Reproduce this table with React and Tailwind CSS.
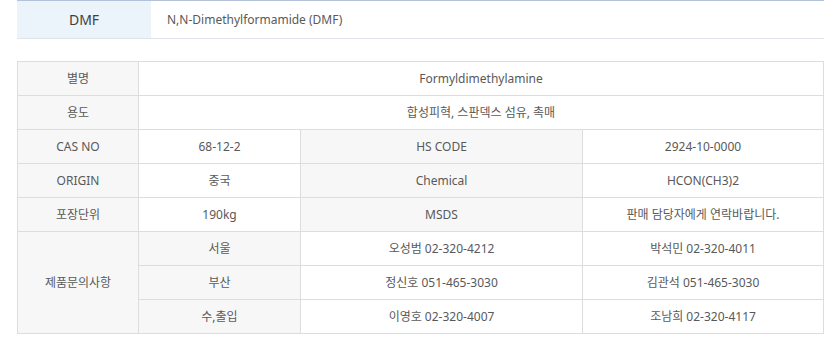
import React from "react";

const H = "bg-[#f7f7f7] flex items-center justify-center";
const W = "bg-white flex items-center justify-center";

export default function App() {
  return (
    <div
      className="bg-white w-[836px] h-[346px] text-[12px] text-[#595959]"
      style={{ fontFamily: '"Noto Sans", "Noto Sans CJK KR", sans-serif' }}
    >
      <div className="ml-[17px] w-[807px]">
        <div className="flex h-[39px] border-t border-b border-t-[#b3c1da] border-b-[#e1e4ea]">
          <div className="w-[134px] bg-[#ebf3fb] flex items-center justify-center text-[14px] text-[#3f3f3f] font-normal">
            DMF
          </div>
          <div className="flex items-center pl-[16px]">N,N-Dimethylformamide (DMF)</div>
        </div>

        <div className="mt-[22px] grid grid-cols-[120px_161px_281px_240px] grid-rows-[repeat(8,33px)] gap-px bg-[#dddddd] p-px">
          <div className={H}>별명</div>
          <div className={`${W} col-span-3`}>Formyldimethylamine</div>

          <div className={H}>용도</div>
          <div className={`${W} col-span-3`}>합성피혁, 스판덱스 섬유, 촉매</div>

          <div className={H}>CAS NO</div>
          <div className={W}>68-12-2</div>
          <div className={H}>HS CODE</div>
          <div className={W}>2924-10-0000</div>

          <div className={H}>ORIGIN</div>
          <div className={W}>중국</div>
          <div className={H}>Chemical</div>
          <div className={W}>HCON(CH3)2</div>

          <div className={H}>포장단위</div>
          <div className={W}>190kg</div>
          <div className={H}>MSDS</div>
          <div className={W}>판매 담당자에게 연락바랍니다.</div>

          <div className={`${H} row-span-3`}>제품문의사항</div>
          <div className={H}>서울</div>
          <div className={W}>오성범 02-320-4212</div>
          <div className={W}>박석민 02-320-4011</div>

          <div className={H}>부산</div>
          <div className={W}>정신호 051-465-3030</div>
          <div className={W}>김관석 051-465-3030</div>

          <div className={H}>수,출입</div>
          <div className={W}>이영호 02-320-4007</div>
          <div className={W}>조남희 02-320-4117</div>
        </div>
      </div>
    </div>
  );
}
